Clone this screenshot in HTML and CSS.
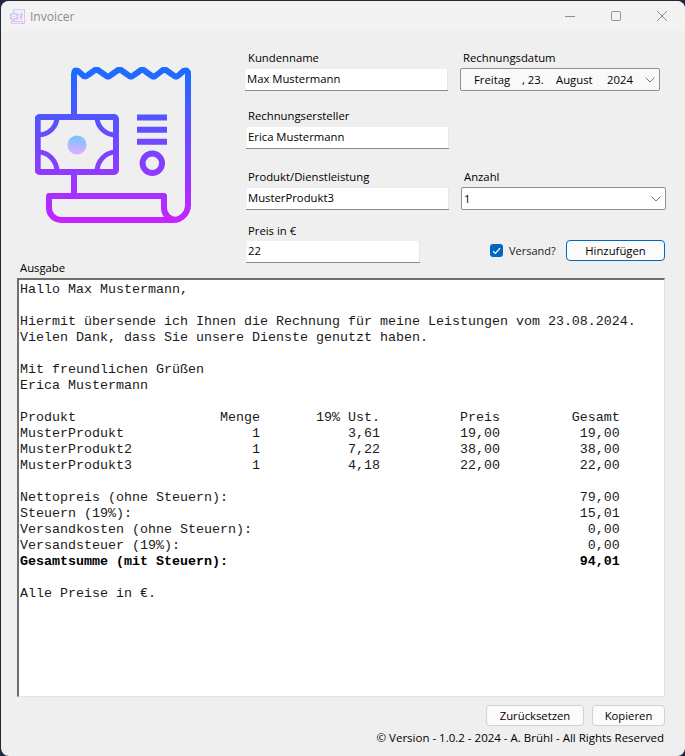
FILE: index.html
```html
<!DOCTYPE html>
<html lang="de">
<head>
<meta charset="utf-8">
<title>Invoicer</title>
<link rel="stylesheet" href="styles.css">
</head>
<body>
<svg class="defs" width="0" height="0" aria-hidden="true">
  <defs>
    <linearGradient id="main" gradientUnits="userSpaceOnUse" x1="0" y1="67" x2="0" y2="223">
      <stop offset="0" stop-color="#1a6dff"/>
      <stop offset="1" stop-color="#c822ff"/>
    </linearGradient>
    <linearGradient id="coin" gradientUnits="userSpaceOnUse" x1="0" y1="135" x2="0" y2="155">
      <stop offset="0" stop-color="#6dc7ff"/>
      <stop offset="1" stop-color="#e6abff"/>
    </linearGradient>
    <symbol id="invoice" viewBox="35 67 156 156">
      <g fill="none" stroke="url(#main)" stroke-width="6" stroke-linejoin="round">
        <path d="M74 116V74Q74 69 78 71L82 74.500Q85 78 88 75L93 71.500Q96.500 68 100 71.500L105 75Q108 78 111 75L116 71.500Q119.500 68 123 71.500L128 75Q131 78 134 75L139 71.500Q142 68 145.500 71.500L150.500 75Q153.500 78 156.500 75L161 71.500Q164.500 68 168 71.500L173 75Q176 78 179 75L183.500 71Q188 69 188 74V205A15 15 0 0 1 173 220H61A12 12 0 0 1 49 208V196H164V208A12 12 0 0 0 176 220"/>
        <path d="M74 175V196"/>
        <rect x="37.700" y="117" width="78.300" height="55" rx="2"/>
        <path d="M57 117A19 18 0 0 1 38 135M38 152A19 20 0 0 1 57 172M97 117A19 18 0 0 0 116 135M116 152A19 20 0 0 0 97 172" stroke-width="5"/>
        <path d="M137 117.500H167M137 129.700H167M137 141.700H167"/>
        <circle cx="152.300" cy="163.300" r="9.700"/>
      </g>
      <circle cx="77" cy="145" r="9.500" fill="url(#coin)"/>
    </symbol>
  </defs>
</svg>
<div class="window">
  <header class="titlebar">
    <svg class="title-icon"><use href="#invoice"/></svg>
    <span class="title">Invoicer</span>
    <div class="controls">
      <span class="control"><svg width="12" height="12" viewBox="0 0 12 12"><path d="M1 6.500H11" class="glyph"/></svg></span>
      <span class="control"><svg width="12" height="12" viewBox="0 0 12 12"><rect x="1.500" y="1.500" width="9" height="9" rx="1" class="glyph"/></svg></span>
      <span class="control"><svg width="12" height="12" viewBox="0 0 12 12"><path d="M1 1L11 11M11 1L1 11" class="glyph"/></svg></span>
    </div>
  </header>

  <section class="top">
    <svg class="logo"><use href="#invoice"/></svg>
    <div class="form">
      <div class="row row-1">
        <div class="field f-name">
          <label class="label">Kundenname</label>
          <div class="input">Max Mustermann</div>
        </div>
        <div class="field f-date">
          <label class="label">Rechnungsdatum</label>
          <div class="combo date">
            <span class="d-day">Freitag</span><span class="d-num">, 23.</span><span class="d-month">August</span><span>2024</span>
            <svg class="chev" width="10" height="6" viewBox="0 0 10 6"><path d="M0.500 0.500L5 5L9.500 0.500"/></svg>
          </div>
        </div>
      </div>
      <div class="row row-2">
        <div class="field f-main">
          <label class="label">Rechnungsersteller</label>
          <div class="input">Erica Mustermann</div>
        </div>
      </div>
      <div class="row row-3">
        <div class="field f-main">
          <label class="label">Produkt/Dienstleistung</label>
          <div class="input">MusterProdukt3</div>
        </div>
        <div class="field f-qty">
          <label class="label">Anzahl</label>
          <div class="combo qty">
            <span>1</span>
            <svg class="chev" width="10" height="6" viewBox="0 0 10 6"><path d="M0.500 0.500L5 5L9.500 0.500"/></svg>
          </div>
        </div>
      </div>
      <div class="row row-4">
        <div class="field f-price">
          <label class="label">Preis in €</label>
          <div class="input">22</div>
        </div>
        <div class="actions">
          <span class="check"><svg width="9" height="8" viewBox="0 0 9 8"><path d="M1 4.200L3.400 6.500L8 1.200"/></svg></span>
          <span class="check-label">Versand?</span>
          <button class="btn btn-primary">Hinzufügen</button>
        </div>
      </div>
    </div>
  </section>

  <div class="output-label">Ausgabe</div>
<pre class="output">Hallo Max Mustermann,

Hiermit übersende ich Ihnen die Rechnung für meine Leistungen vom 23.08.2024.
Vielen Dank, dass Sie unsere Dienste genutzt haben.

Mit freundlichen Grüßen
Erica Mustermann

Produkt                  Menge       19% Ust.          Preis         Gesamt
MusterProdukt                1           3,61          19,00          19,00
MusterProdukt2               1           7,22          38,00          38,00
MusterProdukt3               1           4,18          22,00          22,00

Nettopreis (ohne Steuern):                                            79,00
Steuern (19%):                                                        15,01
Versandkosten (ohne Steuern):                                          0,00
Versandsteuer (19%):                                                   0,00
<b>Gesamtsumme (mit Steuern):                                            94,01</b>

Alle Preise in €.</pre>

  <div class="bottom-actions">
    <button class="btn btn-reset">Zurücksetzen</button>
    <button class="btn btn-copy">Kopieren</button>
  </div>
  <footer class="footer">© Version - 1.0.2 - 2024 - A. Brühl - All Rights Reserved</footer>
</div>
</body>
</html>
```

FILE: styles.css
```css
* { box-sizing: border-box; }
html, body { margin: 0; height: 100%; }
body {
  width: 685px;
  height: 756px;
  overflow: hidden;
  background: #1c2a3c;
  font-family: "Open Sans", "Noto Sans", sans-serif;
  font-size: 11.3px;
  color: #000;
}
.defs { position: absolute; }
.window {
  height: 755px;
  margin: 1px 0 0 1px;
  width: 684px;
  background: #efefef;
  border-radius: 8px;
  display: flex;
  flex-direction: column;
  overflow: hidden;
}
.titlebar {
  height: 30px;
  flex: none;
  display: flex;
  align-items: center;
  background: #f3f3f3;
  padding-left: 9px;
}
.title-icon { width: 15px; height: 15px; opacity: 0.55; }
.title { margin-left: 5px; color: #8c8c8c; font-size: 12px; }
.controls { margin-left: auto; display: flex; }
.control {
  width: 46px;
  height: 30px;
  display: flex;
  align-items: center;
  justify-content: center;
}
.glyph { fill: none; stroke: #8f8f8f; stroke-width: 1; }
.top { height: 229px; flex: none; display: flex; align-items: flex-start; }
.logo { width: 156px; height: 156px; margin: 36px 0 0 34px; flex: none; }
.form { margin-left: 55px; padding-top: 19px; flex: 1; }
.row { display: flex; align-items: flex-start; }
.row-2 { margin-top: 17px; }
.row-3 { margin-top: 20px; }
.row-4 { margin-top: 13px; }
.label {
  display: block;
  height: 18px;
  line-height: 16px;
  padding-left: 2px;
  white-space: nowrap;
}
.field { display: flex; flex-direction: column; }
.input {
  height: 22px;
  margin-top: 1px;
  background: #fff;
  border-bottom: 1px solid #8a8a8a;
  box-shadow: inset 1px 0 #f4f4f4, inset -1px 0 #e6e6e6;
  padding-left: 2px;
  line-height: 20px;
  white-space: nowrap;
}
.f-name { width: 203px; margin-left: -1px; }
.f-name .label { padding-left: 3px; }
.f-main { width: 203px; }
.f-price { width: 174px; }
.f-price .input { margin-top: 0; }
.f-date { width: 200px; margin-left: 12px; }
.f-date .label { padding-left: 3px; }
.f-qty { width: 205px; margin-left: 12px; }
.f-qty .label { padding-left: 3px; }
.combo {
  height: 23px;
  border: 1px solid #8f8f8f;
  border-radius: 2px;
  background: #fff;
  display: flex;
  align-items: center;
  position: relative;
  white-space: nowrap;
}
.date { background: #f9f9f9; padding-left: 13px; }
.qty { padding-left: 2px; }
.d-day { width: 48px; }
.d-num { width: 34px; }
.d-month { width: 51px; }
.chev {
  position: absolute;
  right: 4px;
  top: 8px;
  fill: none;
  stroke: #777;
  stroke-width: 1;
}
.actions {
  display: flex;
  align-items: flex-start;
  margin-left: 70px;
  padding-top: 17px;
}
.check {
  width: 13px;
  height: 13px;
  margin-top: 4px;
  border-radius: 3px;
  background: #0067c0;
  display: flex;
  align-items: center;
  justify-content: center;
}
.check svg { fill: none; stroke: #fff; stroke-width: 1.2; }
.check-label { margin-left: 6px; width: 57px; line-height: 21px; color: #222; font-size: 11px; }
.btn {
  font: inherit;
  color: #000;
  padding: 0;
  background: #fbfbfb;
  border: 1px solid #d2d2d2;
  border-radius: 4px;
  height: 21px;
  line-height: 18px;
}
.btn-primary { width: 99px; border-color: #0067c0; }
.output-label { height: 18px; line-height: 16px; padding-left: 19px; flex: none; }
.output {
  flex: 1;
  margin: 0 20px 0 16px;
  padding: 2px 0 0 1px;
  background: #fff;
  border-style: solid;
  border-width: 2px 1px 1px 2px;
  border-color: #6e6e6e #e3e3e3 #e3e3e3 #6e6e6e;
  font-family: "Liberation Mono", monospace;
  font-size: 13.333px;
  line-height: 16px;
  color: #1a1a1a;
  overflow: hidden;
}
.output b { color: #000; }
.bottom-actions {
  flex: none;
  display: flex;
  justify-content: flex-end;
  gap: 8px;
  margin-top: 8px;
  padding-right: 20px;
}
.btn-reset { width: 98px; }
.btn-copy { width: 73px; }
.footer {
  flex: none;
  height: 30px;
  padding: 4px 21px 0 0;
  font-size: 11.5px;
  line-height: 16px;
  text-align: right;
  white-space: nowrap;
}
```
